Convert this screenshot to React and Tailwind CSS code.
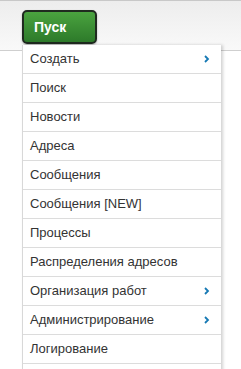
const items = [
  { label: "Создать", sub: true },
  { label: "Поиск" },
  { label: "Новости" },
  { label: "Адреса" },
  { label: "Сообщения" },
  { label: "Сообщения [NEW]" },
  { label: "Процессы" },
  { label: "Распределения адресов" },
  { label: "Организация работ", sub: true },
  { label: "Администрирование", sub: true },
  { label: "Логирование" },
  { label: "" },
];

function Chevron() {
  return (
    <svg width="6" height="8" viewBox="0 0 6 8" className="text-[#1679b4]">
      <path d="M1 1 L4 4 L1 7" fill="none" stroke="currentColor" strokeWidth="1.8" />
    </svg>
  );
}

export default function App() {
  return (
    <div className="relative h-[369px] w-[241px] overflow-hidden bg-white font-['Liberation_Sans',Arial,sans-serif]">
      <div className="h-[51px] border-t border-b border-t-[#c8c8c8] border-b-[#cfcfcf] bg-gradient-to-b from-[#ededed] to-[#f9f9f9] pl-[22px] pt-[9px]">
        <button className="flex h-[34px] w-[75px] items-center rounded-[5px] border-2 border-[#1f2a1f] bg-gradient-to-b from-[#4aa33f] to-[#2d7a2a] pl-[10px] text-[14px] font-bold text-white shadow-[0_1px_2px_rgba(0,0,0,0.3)]">
          Пуск
        </button>
      </div>

      <div className="absolute left-[22px] top-[45px] w-[199px] border-l border-[#d8d8d8] bg-white shadow-[2px_0_3px_rgba(0,0,0,0.18)]">
        {items.map((item, i) => (
          <div
            key={i}
            className="flex h-[29px] items-center justify-between border-b border-[#dcdcdc] pl-[7px] pr-[11px] text-[13px] text-[#333]"
          >
            <span>{item.label}</span>
            {item.sub ? <Chevron /> : null}
          </div>
        ))}
      </div>
    </div>
  );
}
